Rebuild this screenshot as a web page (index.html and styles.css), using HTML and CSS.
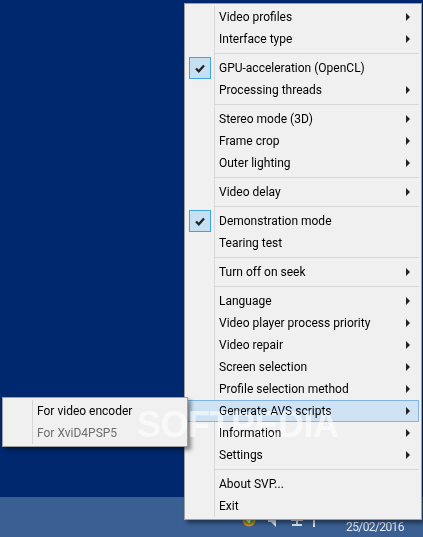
FILE: index.html
```html
<!DOCTYPE html>
<html lang="en">
<head>
    <meta charset="UTF-8">
    <title>SVP tray menu</title>
    <link rel="stylesheet" href="styles.css">
</head>
<body>
    <div class="desktop"></div>

    <div class="taskbar">
        <svg class="tray-icon tray-svp" width="14" height="14" viewBox="0 0 14 14">
            <circle cx="7" cy="7" r="6.5" fill="#e08a1e"/>
            <circle cx="7" cy="7" r="4.5" fill="#5aa02c"/>
            <path d="M4 6l3 3 3-6" fill="none" stroke="#e9f3d8" stroke-width="1.5"/>
        </svg>
        <svg class="tray-icon tray-speaker" width="12" height="12" viewBox="0 0 12 12">
            <path d="M1 2h3l5-2v12L4 7H1z" fill="#dfe6ee"/>
        </svg>
        <svg class="tray-icon tray-net" width="14" height="12" viewBox="0 0 14 12">
            <path d="M1 1h12v5H1zM6 6h2v3h4v2H2V9h4z" fill="#dfe6ee"/>
        </svg>
        <svg class="tray-icon tray-flag" width="6" height="12" viewBox="0 0 6 12">
            <path d="M2 0h2v12H2z" fill="#dfe6ee"/>
        </svg>
        <span class="clock-date">25/02/2016</span>
    </div>

    <div class="menu main-menu">
        <div class="group">
            <div class="item arrow">Video profiles</div>
            <div class="item arrow">Interface type</div>
        </div>
        <div class="group">
            <div class="item">
                <span class="check"><svg width="10" height="9" viewBox="0 0 10 9"><path d="M1 4.5l2.8 2.8L9 1.5" fill="none" stroke="#222" stroke-width="2.2"/></svg></span>
                GPU-acceleration (OpenCL)
            </div>
            <div class="item arrow">Processing threads</div>
        </div>
        <div class="group">
            <div class="item arrow">Stereo mode (3D)</div>
            <div class="item arrow">Frame crop</div>
            <div class="item arrow">Outer lighting</div>
        </div>
        <div class="group">
            <div class="item arrow">Video delay</div>
        </div>
        <div class="group">
            <div class="item">
                <span class="check"><svg width="10" height="9" viewBox="0 0 10 9"><path d="M1 4.5l2.8 2.8L9 1.5" fill="none" stroke="#222" stroke-width="2.2"/></svg></span>
                Demonstration mode
            </div>
            <div class="item">Tearing test</div>
        </div>
        <div class="group">
            <div class="item arrow">Turn off on seek</div>
        </div>
        <div class="group">
            <div class="item arrow">Language</div>
            <div class="item arrow">Video player process priority</div>
            <div class="item arrow">Video repair</div>
            <div class="item arrow">Screen selection</div>
            <div class="item arrow">Profile selection method</div>
            <div class="item arrow active">Generate AVS scripts</div>
            <div class="item arrow">Information</div>
            <div class="item arrow">Settings</div>
        </div>
        <div class="group">
            <div class="item">About SVP...</div>
            <div class="item">Exit</div>
        </div>
    </div>

    <div class="menu sub-menu">
        <div class="item">For video encoder</div>
        <div class="item disabled">For XviD4PSP5</div>
    </div>

    <div class="watermark">SOFTPEDIA</div>
</body>
</html>
```

FILE: styles.css
```css
html, body {
    margin: 0;
    padding: 0;
}

body {
    position: relative;
    width: 423px;
    height: 537px;
    overflow: hidden;
    background: #00286e;
    font-family: 'Roboto', 'Noto Sans', sans-serif;
    font-size: 12px;
    color: #000;
}

.desktop {
    height: 497px;
    background: #00286e;
}

.taskbar {
    height: 40px;
    background: #3a5f92;
}

.tray-icon {
    position: absolute;
}

.tray-svp { left: 242px; top: 513px; }
.tray-speaker { left: 267px; top: 515px; }
.tray-net { left: 290px; top: 515px; }
.tray-flag { left: 311px; top: 515px; }

.clock-date {
    position: absolute;
    left: 346px;
    top: 520px;
    letter-spacing: -0.6px;
    color: #e6ebf2;
}

.menu {
    position: absolute;
    box-sizing: border-box;
    background: #f0f0f0;
    border: 1px solid #a0a0a0;
    padding: 2px;
    box-shadow: 3px 3px 4px rgba(0,0,0,0.45);
}

.main-menu {
    left: 184px;
    top: 3px;
    width: 238px;
    height: 517px;
}

.sub-menu {
    left: 2px;
    top: 397px;
    width: 186px;
    height: 50px;
}

.group {
    border-bottom: 1px solid #d7d7d7;
    margin-left: 28px;
    padding-bottom: 3px;
    margin-bottom: 3px;
}

.group:last-child {
    border-bottom: none;
    padding-bottom: 0;
    margin-bottom: 0;
}

.item {
    position: relative;
    height: 22px;
    line-height: 22px;
    padding-left: 4px;
    white-space: nowrap;
}

.sub-menu .item {
    margin-left: 28px;
}

/* gutter line left of the labels */
.main-menu::before,
.sub-menu::before {
    content: "";
    position: absolute;
    left: 29px;
    top: 2px;
    bottom: 2px;
    width: 1px;
    background: #d7d7d7;
}

.arrow::after {
    content: "";
    position: absolute;
    right: 9px;
    top: 7px;
    border-left: 4px solid #222;
    border-top: 4px solid transparent;
    border-bottom: 4px solid transparent;
}

.check {
    position: absolute;
    left: -26px;
    top: 0;
    box-sizing: border-box;
    width: 22px;
    height: 22px;
    background: #c4e0f2;
    border: 1px solid #3fa4e0;
    display: flex;
    align-items: center;
    justify-content: center;
}

.active {
    margin-left: -28px;
    padding-left: 32px;
    box-sizing: border-box;
    background: #cfe2f4;
    outline: 1px solid #7fb4e4;
    outline-offset: -1px;
}

.disabled {
    color: #6d6d6d;
}

/* overlay keeps the menu labels dark under the watermark */
.watermark {
    position: absolute;
    left: 137px;
    top: 404px;
    font-family: 'Liberation Sans', sans-serif;
    font-weight: bold;
    font-size: 36px;
    letter-spacing: -0.5px;
    color: #fff;
    opacity: 0.6;
    mix-blend-mode: overlay;
    pointer-events: none;
}
```
